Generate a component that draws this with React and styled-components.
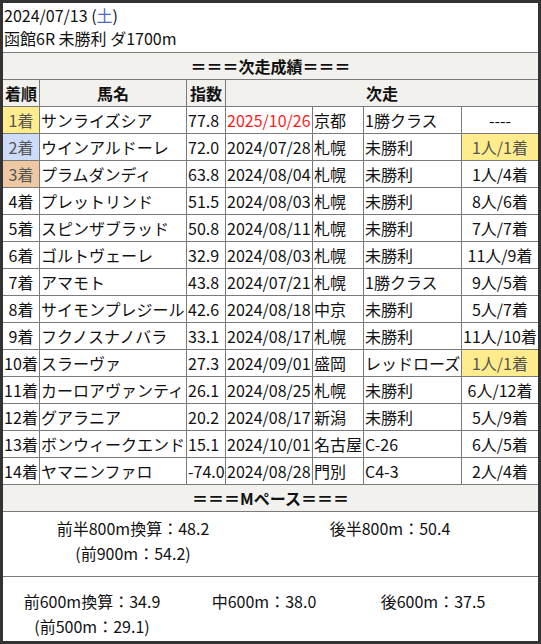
import styled, { createGlobalStyle } from "styled-components";

const GlobalStyle = createGlobalStyle`
  html, body {
    margin: 0;
    padding: 0;
    background: #fff;
  }
  body {
    font-family: "Noto Sans CJK JP", "Noto Sans", sans-serif;
    font-size: 16px;
    color: #111;
  }
`;

const LINE = "#7a7a7a";

const Frame = styled.div`
  width: 541px;
  height: 644px;
  box-sizing: border-box;
  border: 3px solid #333;
  display: flex;
  flex-direction: column;
  overflow: hidden;
`;

const Info = styled.div`
  height: 50px;
  box-sizing: border-box;
  padding: 1px 0 0 1px;
  line-height: 23px;
  border-bottom: 1px solid ${LINE};
`;

const Weekday = styled.span`
  color: #4d6bc6;
`;

const SectionTitle = styled.div`
  height: 26px;
  line-height: 26px;
  text-align: center;
  font-weight: bold;
  background: #f2f1ed;
  border-bottom: 1px solid ${LINE};
`;

const Row = styled.div`
  display: grid;
  grid-template-columns: 36px 147px 39px 87px 51px 98px 77px;
  height: 26px;
  border-bottom: 1px solid ${LINE};
  background: ${(p) => (p.$head ? "#f2f1ed" : "#fff")};
  font-weight: ${(p) => (p.$head ? "bold" : "normal")};
`;

const rankBg = {
  1: "#ffec8c",
  2: "#cddcf8",
  3: "#efc9a3",
};

const Cell = styled.div`
  box-sizing: border-box;
  padding: 0 1px;
  line-height: 26px;
  white-space: nowrap;
  overflow: hidden;
  text-align: ${(p) => p.$align || "left"};
  border-left: ${(p) => (p.$first ? "none" : `1px solid ${LINE}`)};
  background: ${(p) => p.$bg || "transparent"};
  color: ${(p) => (p.$red ? "#ff1a1a" : p.$bg ? "#555" : "inherit")};
  grid-column: ${(p) => p.$span || "auto"};
`;

const PaceBlock = styled.div`
  display: grid;
  grid-template-columns: ${(p) => p.$cols};
  height: ${(p) => p.$h}px;
  box-sizing: border-box;
  padding-top: ${(p) => p.$top}px;
  border-bottom: ${(p) => (p.$line ? `1px solid ${LINE}` : "none")};
  line-height: 25px;
`;

const PaceItem = styled.div`
  text-align: center;
  white-space: nowrap;
`;

const rows = [
  ["サンライズシア", "77.8", "2025/10/26", "京都", "1勝クラス", "----", false, true],
  ["ウインアルドーレ", "72.0", "2024/07/28", "札幌", "未勝利", "1人/1着", true],
  ["プラムダンディ", "63.8", "2024/08/04", "札幌", "未勝利", "1人/4着"],
  ["プレットリンド", "51.5", "2024/08/03", "札幌", "未勝利", "8人/6着"],
  ["スピンザブラッド", "50.8", "2024/08/11", "札幌", "未勝利", "7人/7着"],
  ["ゴルトヴェーレ", "32.9", "2024/08/03", "札幌", "未勝利", "11人/9着"],
  ["アマモト", "43.8", "2024/07/21", "札幌", "1勝クラス", "9人/5着"],
  ["サイモンプレジール", "42.6", "2024/08/18", "中京", "未勝利", "5人/7着"],
  ["フクノスナノバラ", "33.1", "2024/08/17", "札幌", "未勝利", "11人/10着"],
  ["スラーヴァ", "27.3", "2024/09/01", "盛岡", "レッドローズ", "1人/1着", true],
  ["カーロアヴァンティ", "26.1", "2024/08/25", "札幌", "未勝利", "6人/12着"],
  ["グアラニア", "20.2", "2024/08/17", "新潟", "未勝利", "5人/9着"],
  ["ボンウィークエンド", "15.1", "2024/10/01", "名古屋", "C-26", "6人/5着"],
  ["ヤマニンファロ", "-74.0", "2024/08/28", "門別", "C4-3", "2人/4着"],
];

const App = () => {
  return (
    <>
      <GlobalStyle />
      <Frame>
        <Info>
          <div>
            2024/07/13 (<Weekday>土</Weekday>)
          </div>
          <div>函館6R 未勝利 ダ1700m</div>
        </Info>

        <SectionTitle>＝＝＝次走成績＝＝＝</SectionTitle>

        <Row $head>
          <Cell $first $align="center">着順</Cell>
          <Cell $align="center">馬名</Cell>
          <Cell $align="center">指数</Cell>
          <Cell $align="center" $span="4 / span 4">次走</Cell>
        </Row>

        {rows.map(([name, idx, date, place, cls, result, win, red], i) => (
          <Row key={name}>
            <Cell $first $align="center" $bg={rankBg[i + 1]}>
              {i + 1}着
            </Cell>
            <Cell>{name}</Cell>
            <Cell>{idx}</Cell>
            <Cell $red={red}>{date}</Cell>
            <Cell>{place}</Cell>
            <Cell>{cls}</Cell>
            <Cell $align="center" $bg={win ? rankBg[1] : undefined}>
              {result}
            </Cell>
          </Row>
        ))}

        <SectionTitle>＝＝＝Mペース＝＝＝</SectionTitle>

        <PaceBlock $cols="260px 254px" $h={65} $top={4} $line>
          <PaceItem>
            <div>前半800m換算：48.2</div>
            <div>(前900m：54.2)</div>
          </PaceItem>
          <PaceItem>後半800m：50.4</PaceItem>
        </PaceBlock>

        <PaceBlock $cols="178px 166px 172px" $h={63} $top={12}>
          <PaceItem>
            <div>前600m換算：34.9</div>
            <div>(前500m：29.1)</div>
          </PaceItem>
          <PaceItem>中600m：38.0</PaceItem>
          <PaceItem>後600m：37.5</PaceItem>
        </PaceBlock>
      </Frame>
    </>
  );
};

export default App;
